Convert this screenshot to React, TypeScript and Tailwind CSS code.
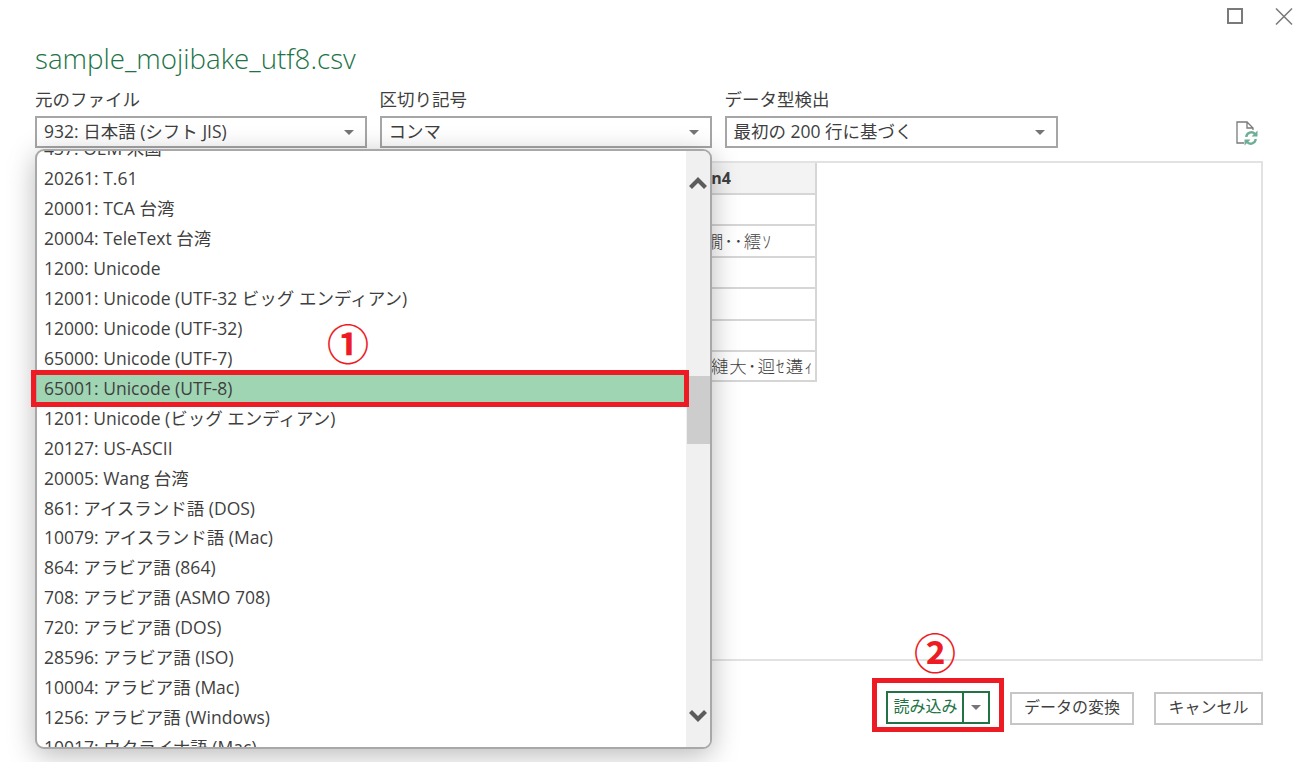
const items = [
  "437: OEM 米国",
  "20261: T.61",
  "20001: TCA 台湾",
  "20004: TeleText 台湾",
  "1200: Unicode",
  "12001: Unicode (UTF-32 ビッグ エンディアン)",
  "12000: Unicode (UTF-32)",
  "65000: Unicode (UTF-7)",
  "65001: Unicode (UTF-8)",
  "1201: Unicode (ビッグ エンディアン)",
  "20127: US-ASCII",
  "20005: Wang 台湾",
  "861: アイスランド語 (DOS)",
  "10079: アイスランド語 (Mac)",
  "864: アラビア語 (864)",
  "708: アラビア語 (ASMO 708)",
  "720: アラビア語 (DOS)",
  "28596: アラビア語 (ISO)",
  "10004: アラビア語 (Mac)",
  "1256: アラビア語 (Windows)",
  "10017: ウクライナ語 (Mac)",
];

const font = { fontFamily: '"Open Sans", "Noto Sans CJK JP", sans-serif' };

function Caret({ className = "" }: { className?: string }) {
  return (
    <svg width="10" height="5" viewBox="0 0 10 5" className={className}>
      <path d="M0 0h10L5 5z" fill="#757575" />
    </svg>
  );
}

function Select({ label, value, width }: { label: string; value: string; width: string }) {
  return (
    <div className={`flex flex-col ${width}`}>
      <div className="h-[28px] text-[17.5px] leading-[22px] text-[#3f3f3f]">{label}</div>
      <div className="flex h-[32px] items-center justify-between border-2 border-[#a6a6a6] bg-white pb-[2px] pl-[7px] pr-[11px] text-[17.5px] text-[#3f3f3f]">
        <span>{value}</span>
        <Caret className="mt-[2px]" />
      </div>
    </div>
  );
}

function Row({ text, pad, last }: { text?: string; pad?: string; last?: boolean }) {
  return (
    <div className={`flex h-[31.5px] items-center justify-end whitespace-nowrap border-t-2 border-[#d6d6d6] text-[17.5px] font-light tracking-[1px] text-[#3f3f3f] ${pad ?? ""} ${last ? "border-b-2" : ""}`}>
      {text}
    </div>
  );
}

export default function App() {
  return (
    <div className="relative h-[762px] w-[1305px] overflow-hidden bg-white" style={font}>
      <div className="flex h-[40px] items-start justify-end gap-[32px] pr-[12px] pt-[8px]">
        <div className="h-[16px] w-[16px] border-2 border-[#7a7a7a]" />
        <svg width="18" height="17" viewBox="0 0 18 17">
          <path d="M1 0.5l16 16M17 0.5L1 16.5" stroke="#7a7a7a" strokeWidth="1.5" />
        </svg>
      </div>

      <div className="pl-[35px] pr-[42px]">
        <div className="h-[48px] text-[27.7px] font-light leading-[36px] text-[#217346]">sample_mojibake_utf8.csv</div>

        <div className="flex items-end">
          <div className="flex gap-[12.5px]">
            <Select label="元のファイル" value="932: 日本語 (シフト JIS)" width="w-[332px]" />
            <Select label="区切り記号" value="コンマ" width="w-[332.5px]" />
            <Select label="データ型検出" value="最初の 200 行に基づく" width="w-[333px]" />
          </div>
          <svg width="23" height="25" viewBox="0 0 23 25" className="mb-[2px] ml-auto mr-[4px]">
            <path d="M8 22H1V1h10l6 6v2M11 1v6h6" fill="none" stroke="#7a7a7a" strokeWidth="1.3" />
            <g fill="none" stroke="#6fae96" strokeWidth="2.4">
              <path d="M10.3 16a5 5 0 0 1 8.7-3" />
              <path d="M19.7 18a5 5 0 0 1-8.7 3" />
            </g>
            <path d="M21.5 9.5v6h-6zM8.5 24.5v-6h6z" fill="#6fae96" />
          </svg>
        </div>

        <div className="mt-[13px] h-[500px] w-[1228px] border-2 border-[#e2e2e2]">
          <div className="w-[780px] border-r-2 border-[#d6d6d6]">
            <div className="flex h-[29.5px] items-center justify-end bg-[#f3f3f3] pr-[84px] text-[16px] font-bold text-[#3f3f3f]">n4</div>
            <Row />
            <Row text="繝･･繧ｿ" pad="pr-[43px]" />
            <Row />
            <Row />
            <Row />
            <Row text="縺大･迴ｾ遘ｨ" pad="pr-[1px]" last />
          </div>
        </div>

        <div className="mt-[30px] flex items-start justify-end">
          <div className="flex h-[33px] w-[104px] border-2 border-[#217346] text-[16px] text-[#217346]">
            <div className="flex flex-1 items-center justify-center pb-[3px] pl-[1px]">読み込み</div>
            <div className="flex w-[26px] items-center justify-center border-l-2 border-[#217346]">
              <Caret />
            </div>
          </div>
          <div className="ml-[20px] mt-[1px] flex h-[33px] w-[124px] items-center justify-center border-2 border-[#c6c6c6] pb-[3px] text-[16px] text-[#3f3f3f]">データの変換</div>
          <div className="ml-[20px] mt-[1px] flex h-[33px] w-[109px] items-center justify-center border-2 border-[#c6c6c6] pb-[3px] text-[16px] text-[#3f3f3f]">キャンセル</div>
        </div>
      </div>

      {/* Open dropdown */}
      <div className="absolute left-[35px] top-[149px] flex h-[600px] w-[677px] overflow-hidden rounded-[9px] border-2 border-[#a8a8a8] bg-white shadow-[0_6px_28px_rgba(0,0,0,0.28)]">
        <div className="flex-1 overflow-hidden">
          <div className="-mt-[17.6px]">
            {items.map((t, i) => (
              <div
                key={t}
                className={`flex h-[29.95px] items-center whitespace-nowrap pl-[7px] text-[17.5px] text-[#3f3f3f] ${i === 8 ? "bg-[#9fd5b3]" : ""}`}
              >
                {t}
              </div>
            ))}
          </div>
        </div>
        <div className="relative flex w-[24px] flex-col justify-between bg-[#f0f0f0] pb-[23px] pt-[24px]">
          <svg width="18" height="14" viewBox="0 0 18 14" className="ml-[3px]">
            <path d="M1.5 12.5L9 5l7.5 7.5" fill="none" stroke="#5c5c5c" strokeWidth="4.2" />
          </svg>
          <div className="absolute left-[1px] top-[225px] h-[68px] w-[23px] bg-[#cdcdcd]" />
          <svg width="18" height="14" viewBox="0 0 18 14" className="ml-[3px]">
            <path d="M1.5 1.5L9 9l7.5-7.5" fill="none" stroke="#5c5c5c" strokeWidth="4.2" />
          </svg>
        </div>
      </div>

      {/* Annotations */}
      <div className="absolute left-[31px] top-[370px] h-[37px] w-[658px] border-[5px] border-[#ed1c24]" />
      <div className="absolute left-[872px] top-[678px] h-[54px] w-[132px] border-[5px] border-[#ed1c24]" />
      <div className="absolute left-[327px] top-[320px] text-[42px] font-bold leading-[48px] text-[#ed1c24]">①</div>
      <div className="absolute left-[914px] top-[629px] text-[42px] font-bold leading-[48px] text-[#ed1c24]">②</div>
    </div>
  );
}
